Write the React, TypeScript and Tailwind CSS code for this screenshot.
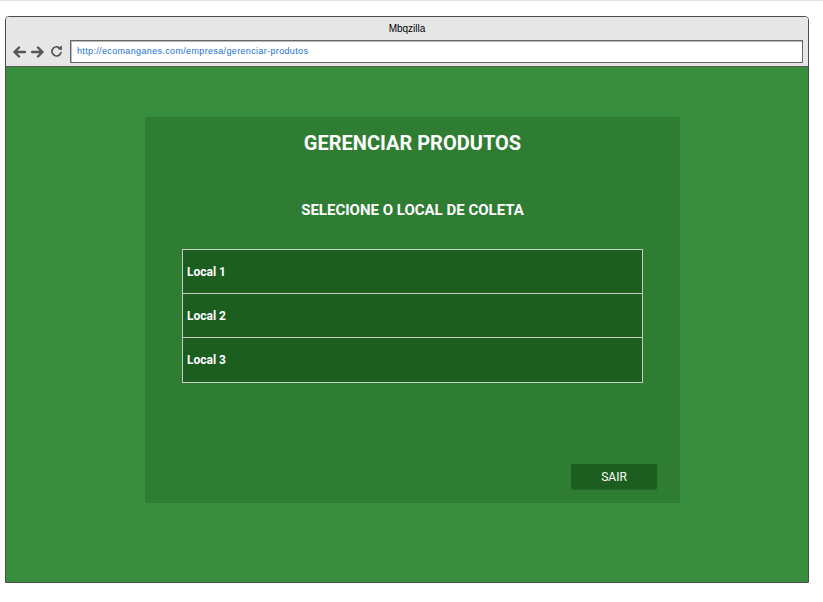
import React from "react";

function Arrow({ dir }: { dir: "left" | "right" }) {
  return (
    <svg width="14" height="14" viewBox="0 0 14 14" className="block">
      {dir === "left" ? (
        <path d="M13 7H2.5M7 2.5L2.5 7L7 11.5" stroke="#555" strokeWidth="2.4" fill="none" strokeLinecap="round" strokeLinejoin="round" />
      ) : (
        <path d="M1 7H11.5M7 2.5L11.5 7L7 11.5" stroke="#555" strokeWidth="2.4" fill="none" strokeLinecap="round" strokeLinejoin="round" />
      )}
    </svg>
  );
}

function Reload() {
  return (
    <svg width="13" height="13" viewBox="0 0 13 13" className="block">
      <path d="M10.6 4.2A4.6 4.6 0 1 0 11 7.5" stroke="#555" strokeWidth="1.7" fill="none" strokeLinecap="round" />
      <path d="M8 3.6L11.4 4.6L11.6 1.2Z" fill="#555" stroke="#555" strokeWidth="0.8" strokeLinejoin="round" />
    </svg>
  );
}

export default function App() {
  const rows = ["Local 1", "Local 2", "Local 3"];
  return (
    <div className="w-[823px] h-[602px] bg-white" style={{ fontFamily: "Roboto, 'Liberation Sans', sans-serif" }}>
      <div className="h-[1px] bg-[#e3e3e3]" />
      <div className="pt-[15px] pl-[5px]">
        <div className="w-[804px] h-[567px] border border-[#4d4d4d] rounded-t-[4px] flex flex-col overflow-hidden">
          <div className="bg-[#e6e6e6] h-[50px] flex flex-col border-b border-[#5a5a5a]">
            <div className="h-[22px] flex items-center justify-center text-[10px] text-black" style={{ fontFamily: "'Liberation Sans', Arial, sans-serif" }}>
              Mbqzilla
            </div>
            <div className="flex items-center pl-[6px] pr-[5px] pt-[1px]">
              <div className="flex items-center gap-[5px] w-[58px]">
                <Arrow dir="left" />
                <Arrow dir="right" />
                <Reload />
              </div>
              <div className="flex-1 h-[23px] bg-white border border-[#666] shadow-[inset_1px_1px_0_#bbb] flex items-center pl-[6px] text-[9px] tracking-[0.35px] text-[#1a6fd6]" style={{ fontFamily: "'Liberation Sans', Arial, sans-serif" }}>
                http://ecomanganes.com/empresa/gerenciar-produtos
              </div>
            </div>
          </div>
          <div className="flex-1 bg-[#388e3c] pl-[139px] pt-[50px]">
            <div className="w-[535px] h-[386px] bg-[#2e7d32] flex flex-col pt-[14px] px-[37px] pb-[14px]">
              <div className="text-center text-white font-bold text-[20px] leading-[24px]">GERENCIAR PRODUTOS</div>
              <div className="text-center text-white font-bold text-[15px] leading-[18px] mt-[46px]">SELECIONE O LOCAL DE COLETA</div>
              <div className="mt-[30px] border border-[#c5cdc5]">
                {rows.map((r, i) => (
                  <div
                    key={r}
                    className={`h-[44px] bg-[#1b5e20] flex items-center pl-[4px] text-white font-bold text-[12px] ${i < rows.length - 1 ? "border-b border-[#c5cdc5]" : ""}`}
                  >
                    {r}
                  </div>
                ))}
              </div>
              <div className="mt-auto flex justify-end -mr-[14px]">
                <div className="w-[86px] h-[25px] bg-[#1b5e20] rounded-[2px] shadow-[0_1px_1px_rgba(0,0,0,0.2)] flex items-center justify-center pt-[1px] text-white text-[12px] font-normal">
                  SAIR
                </div>
              </div>
            </div>
          </div>
        </div>
      </div>
    </div>
  );
}
